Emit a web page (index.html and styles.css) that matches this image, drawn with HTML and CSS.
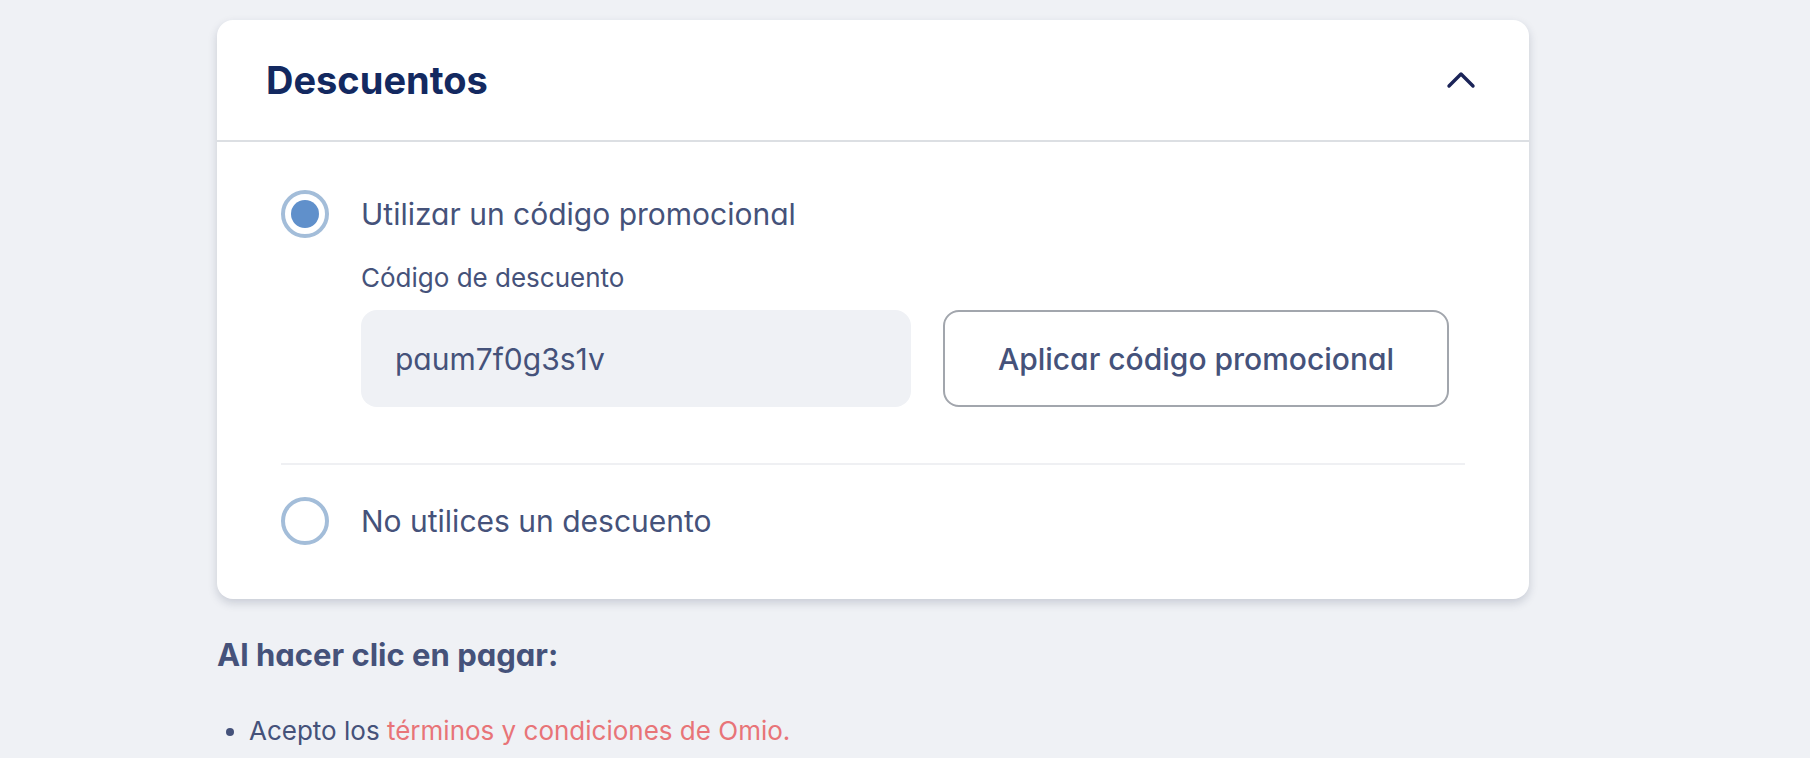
FILE: index.html
```
<!doctype html>
<html lang="es">
<head>
  <meta charset="utf-8">

  <meta name="viewport" content="width=device-width, initial-scale=1">

  <title>Descuentos</title>

  <link rel="stylesheet" href="styles.css">

</head>
<body>

  <main class="page">

    <section class="card">
      <header class="card-header">
        <h2 class="card-title">Descuentos</h2>
        <button class="toggle" type="button" aria-expanded="true" aria-label="Ocultar descuentos">
          <svg width="32" height="20" viewBox="0 0 32 20" fill="none" stroke="currentColor" stroke-width="3.4" stroke-linecap="round" stroke-linejoin="round">
            <path d="M4 16 L16 4 L28 16" />
          </svg>
        </button>
      </header>

      <form class="card-body">
        <div class="option">
          <input class="radio" type="radio" name="discount" id="use-code" checked>
          <label class="option-label" for="use-code">Utilizar un código promocional</label>
        </div>

        <div class="code">
          <label class="code-label" for="code">Código de descuento</label>
          <div class="code-row">
            <input class="code-input" type="text" id="code" value="paum7f0g3s1v" spellcheck="false">
            <button class="code-button" type="button">Aplicar código promocional</button>
          </div>
        </div>

        <div class="option option-last">
          <input class="radio" type="radio" name="discount" id="no-code">
          <label class="option-label" for="no-code">No utilices un descuento</label>
        </div>
      </form>
    </section>

    <section class="terms">
      <h3 class="terms-title">Al hacer clic en pagar:</h3>
      <ul class="terms-list">
        <li>Acepto los <a href="#">términos y condiciones de Omio.</a></li>
      </ul>
    </section>

  </main>

</body>
</html>
```

FILE: styles.css
```
* {
  box-sizing: border-box;
}

body {
  margin: 0;
  background: #EFF1F5;
  color: #45527A;
  font-family: Inter, "Liberation Sans", sans-serif;
  /* single-storey a */
  font-feature-settings: "cv11";
}

h2,
h3,
ul {
  margin: 0;
  padding: 0;
}

input,
button {
  margin: 0;
  color: inherit;
  font-family: inherit;
  font-feature-settings: inherit;
}

.page {
  padding: 20px 281px 0 217px;
}

/* card */

.card {
  background: #FFF;
  border-radius: 16px;
  box-shadow: 0 4px 10px rgba(30, 40, 70, 0.18);
}

.card-header {
  display: flex;
  align-items: center;
  justify-content: space-between;
  padding: 36px 52px 36px 49px;
  border-bottom: 2px solid #DCDFE3;
}

.card-title {
  color: #132960;
  font-size: 38px;
  line-height: 48px;
  font-weight: 700;
}

.toggle {
  display: flex;
  padding: 0;
  border: 0;
  background: none;
  color: #1B2458;
}

.card-body {
  padding: 48px 64px 54px;
}

/* options */

.option {
  display: flex;
  align-items: center;
  gap: 32px;
}

.option-label {
  font-size: 30px;
  line-height: 48px;
}

.option-last {
  padding-top: 32px;
  border-top: 2px solid #EFF0F3;
}

.radio {
  display: grid;
  place-items: center;
  flex: none;
  width: 48px;
  height: 48px;
  border: 4px solid #A3BDD9;
  border-radius: 50%;
  background: #FFF;
  appearance: none;
}

.radio:checked::before {
  content: '';
  width: 28px;
  height: 28px;
  border-radius: 50%;
  background: #6090CB;
}

/* promo code */

.code {
  padding: 24px 16px 56px 80px;
}

.code-label {
  display: block;
  margin-bottom: 16px;
  font-size: 26px;
  line-height: 32px;
}

.code-row {
  display: grid;
  grid-template-columns: 25fr 23fr;
  gap: 32px;
}

.code-input,
.code-button {
  min-width: 0;
  height: 97px;
  border-radius: 16px;
  font-size: 30px;
}

.code-input {
  padding: 0 34px;
  border: 0;
  background: #EFF1F5;
}

.code-button {
  padding: 0 16px;
  border: 2px solid #A2A6AD;
  background: #FFF;
  font-weight: 500;
}

/* terms */

.terms {
  padding: 36px 0 0;
}

.terms-title {
  font-size: 31px;
  line-height: 40px;
  font-weight: 700;
}

.terms-list {
  padding: 36px 0 0 32px;
  font-size: 26px;
  line-height: 40px;
}

.terms-list a {
  color: #E87478;
  text-decoration: none;
}
```
